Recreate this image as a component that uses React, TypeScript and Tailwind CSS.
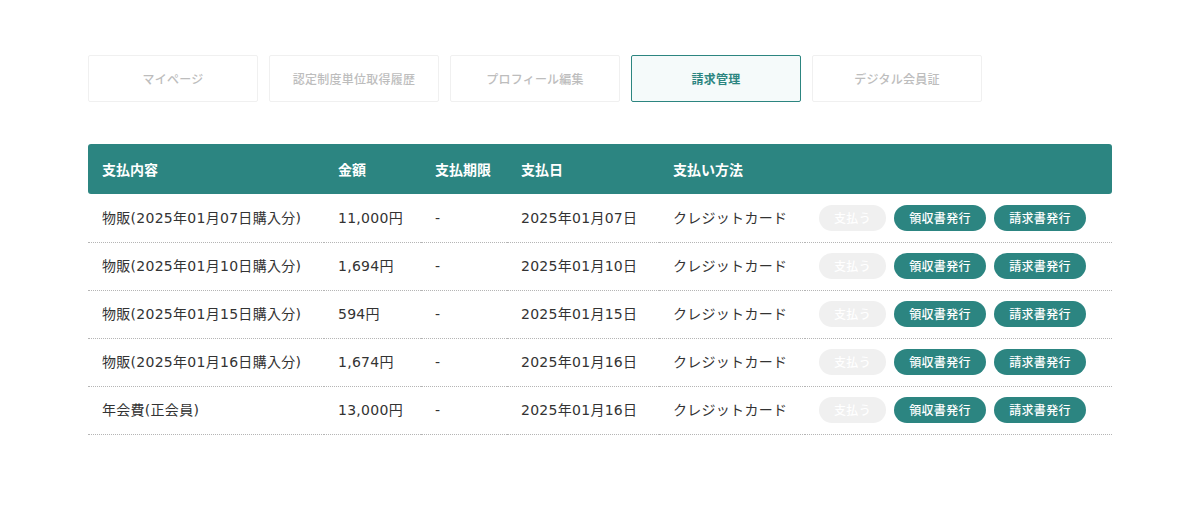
import React from 'react';

const TABS = ['マイページ', '認定制度単位取得履歴', 'プロフィール編集', '請求管理', 'デジタル会員証'];

const ROWS = [
  { item: '物販(2025年01月07日購入分)', amount: '11,000円', due: '-', paid: '2025年01月07日', method: 'クレジットカード' },
  { item: '物販(2025年01月10日購入分)', amount: '1,694円', due: '-', paid: '2025年01月10日', method: 'クレジットカード' },
  { item: '物販(2025年01月15日購入分)', amount: '594円', due: '-', paid: '2025年01月15日', method: 'クレジットカード' },
  { item: '物販(2025年01月16日購入分)', amount: '1,674円', due: '-', paid: '2025年01月16日', method: 'クレジットカード' },
  { item: '年会費(正会員)', amount: '13,000円', due: '-', paid: '2025年01月16日', method: 'クレジットカード' },
];

export default function App() {
  return (
    <div
      className="min-h-[520px] w-[1200px] bg-white pt-[55px]"
      style={{ fontFamily: '"Noto Sans CJK JP", "Noto Sans", sans-serif' }}
    >
      {/* Tabs */}
      <div className="ml-[88px] flex gap-[11px]">
        {TABS.map((tab) => {
          const active = tab === '請求管理';
          return (
            <div
              key={tab}
              className={
                active
                  ? 'flex h-[47px] w-[170px] items-center justify-center rounded-[2px] border border-[#2c8580] bg-[#f5fafa] text-[12px] font-bold tracking-[0.02em] text-[#2c8580]'
                  : 'flex h-[47px] w-[170px] items-center justify-center rounded-[2px] border border-[#f0f0f0] bg-white text-[12px] font-medium tracking-[0.02em] text-[#bdbdbd]'
              }
            >
              {tab}
            </div>
          );
        })}
      </div>

      {/* Table */}
      <div className="ml-[88px] mt-[42px] w-[1024px]">
        <table className="w-full table-fixed border-collapse text-left">
          <colgroup>
            <col className="w-[236px]" />
            <col className="w-[97px]" />
            <col className="w-[86px]" />
            <col className="w-[152px]" />
            <col className="w-[146px]" />
            <col />
          </colgroup>
          <thead>
            <tr className="h-[50px] text-[14px] font-bold text-white">
              <th className="rounded-l-[3px] bg-[#2c8581] pl-[14px] font-bold">支払内容</th>
              <th className="bg-[#2c8581] pl-[14px] font-bold">金額</th>
              <th className="bg-[#2c8581] pl-[14px] font-bold">支払期限</th>
              <th className="bg-[#2c8581] pl-[14px] font-bold">支払日</th>
              <th className="bg-[#2c8581] pl-[14px] font-bold">支払い方法</th>
              <th className="rounded-r-[3px] bg-[#2c8581]"></th>
            </tr>
          </thead>
          <tbody>
            {ROWS.map((row) => (
              <tr
                key={row.item + row.paid}
                className="h-[48px] border-b border-dotted border-[#b5b5b5] text-[14px] tracking-[0.02em] text-[#333333]"
                style={{ fontFamily: '"DejaVu Sans", "Noto Sans CJK JP", sans-serif' }}
              >
                <td className="pl-[14px] pt-[1px]">{row.item}</td>
                <td className="pl-[14px] pt-[1px]">{row.amount}</td>
                <td className="pl-[14px] pt-[1px]">{row.due}</td>
                <td className="pl-[14px] pt-[1px]">{row.paid}</td>
                <td className="pl-[14px] pt-[1px]">{row.method}</td>
                <td className="pl-[14px]">
                  <div className="flex items-center gap-[8px]" style={{ fontFamily: '"Noto Sans CJK JP", sans-serif' }}>
                    <span className="flex h-[26px] w-[67px] items-center justify-center rounded-full bg-[#f0f0f0] text-[12px] font-medium text-white">
                      支払う
                    </span>
                    <span className="flex h-[26px] w-[92px] items-center justify-center rounded-full bg-[#2c8581] text-[12px] font-medium text-white">
                      領収書発行
                    </span>
                    <span className="flex h-[26px] w-[92px] items-center justify-center rounded-full bg-[#2c8581] text-[12px] font-medium text-white">
                      請求書発行
                    </span>
                  </div>
                </td>
              </tr>
            ))}
          </tbody>
        </table>
      </div>
    </div>
  );
}
